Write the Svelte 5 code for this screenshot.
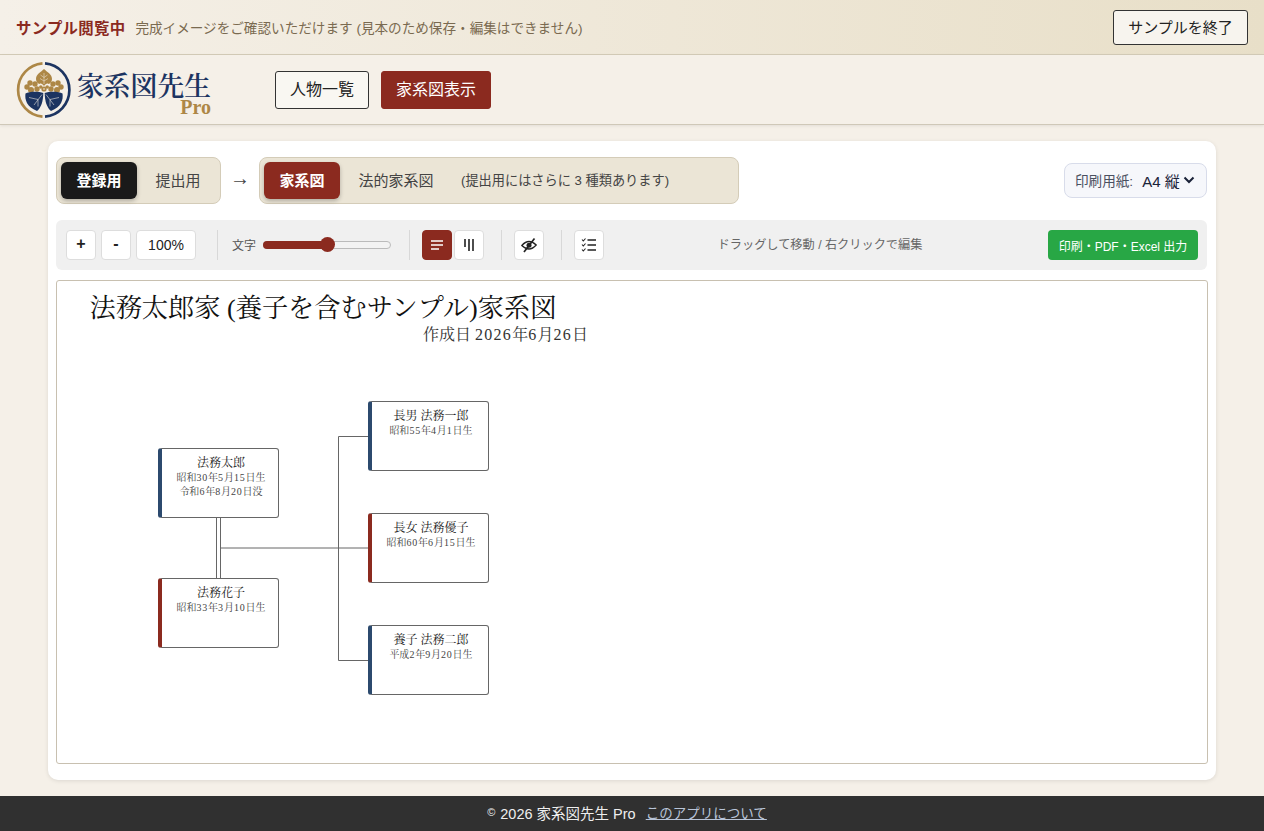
<script>
  const nodes = [
    { name: '法務太郎', lines: ['昭和30年5月15日生', '令和6年8月20日没'], x: 101, y: 167, g: 'm' },
    { name: '法務花子', lines: ['昭和33年3月10日生'], x: 101, y: 297, g: 'f' },
    { name: '長男 法務一郎', lines: ['昭和55年4月1日生'], x: 311, y: 120, g: 'm' },
    { name: '長女 法務優子', lines: ['昭和60年6月15日生'], x: 311, y: 232, g: 'f' },
    { name: '養子 法務二郎', lines: ['平成2年9月20日生'], x: 311, y: 344, g: 'm' }
  ];
  const parts = (s) => s.split(/(\d+)/).filter(Boolean).map((t) => ({ t, num: /^\d/.test(t) }));
</script>

<div class="page">
  <div class="banner">
    <div class="banner-msg">
      <strong>サンプル閲覧中</strong>
      <span>完成イメージをご確認いただけます (見本のため保存・編集はできません)</span>
    </div>
    <button class="exit">サンプルを終了</button>
  </div>

  <header class="header">
    <div class="logo">
      <svg class="mark" viewBox="2 2 56 56" width="56" height="56" aria-hidden="true">
        <path d="M28.500 3.400 A26.700 26.700 0 0 0 28.500 56.600" fill="none" stroke="#ad8746" stroke-width="2.700"/>
        <path d="M31 3.400 A26.700 26.700 0 0 1 31 56.600" fill="none" stroke="#1c3461" stroke-width="2.700"/>
        <path d="M30 9 C33 12 38 14 38 19 C38 22 36 23.500 34.500 24 C33 23 31.500 24 30 26 C28.500 24 27 23 25.500 24 C24 23.500 22 22 22 19 C22 14 27 12 30 9Z" fill="#ad8746"/>
        <path d="M30 13 V24 M30 17.500 L26.500 15 M30 17.500 L33.500 15 M30 21 L26 18.500 M30 21 L34 18.500" stroke="#f5f0e8" stroke-width=".5" fill="none"/>
        <g fill="#ad8746">
          <circle cx="16" cy="23" r="2.700"/><circle cx="21" cy="24" r="2.700"/><circle cx="13" cy="27" r="2.700"/><circle cx="23" cy="29" r="2.700"/><circle cx="17" cy="30" r="3"/>
          <circle cx="44" cy="23" r="2.700"/><circle cx="39" cy="24" r="2.700"/><circle cx="47" cy="27" r="2.700"/><circle cx="37" cy="29" r="2.700"/><circle cx="43" cy="30" r="3"/>
          <circle cx="30" cy="29" r="2.600"/><circle cx="26.800" cy="27" r="1.800"/><circle cx="33.200" cy="27" r="1.800"/>
        </g>
        <circle cx="30" cy="29" r=".8" fill="#f5f0e8"/>
        <path d="M29.300 33 C24 31 15 31.500 11.500 33.500 C10.500 40 13 47 23 51 C27 48 29.300 41 29.300 33Z" fill="#1c3461"/>
        <path d="M30.700 33 C36 31 45 31.500 48.500 33.500 C49.500 40 47 47 37 51 C33 48 30.700 41 30.700 33Z" fill="#1c3461"/>
        <path d="M28 34.500 L20 45 M24 39.500 L15 37.500 M24 39.500 L24 46.500 M32 34.500 L40 45 M36 39.500 L45 37.500 M36 39.500 L36 46.500" stroke="#e8e4dc" stroke-width=".6" fill="none"/>
      </svg>
      <div class="logo-text">
        <span class="logo-name">家系図先生</span>
        <span class="logo-pro">Pro</span>
      </div>
    </div>
    <nav class="nav">
      <button class="nav-btn">人物一覧</button>
      <button class="nav-btn active">家系図表示</button>
    </nav>
  </header>

  <main class="main">
    <section class="card">
      <div class="tabs-row">
        <div class="seg">
          <button class="seg-btn dark">登録用</button>
          <button class="seg-btn second">提出用</button>
        </div>
        <span class="arrow">→</span>
        <div class="seg">
          <button class="seg-btn red">家系図</button>
          <button class="seg-btn legal">法的家系図</button>
          <span class="seg-note">(提出用にはさらに 3 種類あります)</span>
        </div>
        <div class="paper">
          <span class="paper-label">印刷用紙:</span>
          <span class="paper-value">A4 縦</span>
          <svg width="12" height="12" viewBox="0 0 12 12" aria-hidden="true"><path d="M1.500 3.500 L6 8 L10.500 3.500" fill="none" stroke="#1a2238" stroke-width="2"/></svg>
        </div>
      </div>

      <div class="toolbar">
        <button class="tool bold">+</button>
        <button class="tool bold">-</button>
        <button class="tool zoom">100%</button>
        <span class="sep first"></span>
        <span class="tlabel">文字</span>
        <div class="slider"><div class="fill"></div><div class="thumb"></div></div>
        <span class="sep"></span>
        <div class="pair">
          <button class="tool on" aria-label="横">
            <svg width="14" height="14" viewBox="0 0 14 14"><path d="M1 3 H13 M1 7 H13 M1 11 H9" stroke="#fff" stroke-width="1.600"/></svg>
          </button>
          <button class="tool" aria-label="縦">
            <svg width="14" height="14" viewBox="0 0 14 14"><path d="M3 1 V9 M7 1 V13 M11 1 V13" stroke="#222" stroke-width="1.600"/></svg>
          </button>
        </div>
        <span class="sep"></span>
        <button class="tool" aria-label="非表示">
          <svg width="16" height="16" viewBox="0 0 16 16"><path d="M.8 8.500 C3.500 5.500 6 4.500 8 4.500 C10 4.500 12.500 5.500 15.200 8 C12.500 11 10 12 8 12 C6 12 3.500 11.200 .8 8.500Z" fill="none" stroke="#222" stroke-width="1.300"/><circle cx="8" cy="8.200" r="2.500" fill="#222"/><path d="M13.500 1.500 L3 15" stroke="#222" stroke-width="1.700"/></svg>
        </button>
        <span class="sep"></span>
        <button class="tool" aria-label="チェック">
          <svg width="16" height="16" viewBox="0 0 16 16"><path d="M6.500 3 H15 M6.500 8 H15 M6.500 13 H15" stroke="#222" stroke-width="1.400"/><path d="M1 2.500 L2.300 4 L4.500 1.500 M1 7.500 L2.300 9 L4.500 6.500 M1 12.500 L2.300 14 L4.500 11.500" fill="none" stroke="#222" stroke-width="1.100"/></svg>
        </button>
        <span class="hint">ドラッグして移動 / 右クリックで編集</span>
        <button class="export">印刷・PDF・Excel 出力</button>
      </div>

      <div class="canvas">
        <h1 class="title">法務太郎家 (養子を含むサンプル)家系図</h1>
        <p class="date">{#each parts('作成日 2026年6月26日') as p}<span class:num={p.num}>{p.t}</span>{/each}</p>
        <svg class="lines" width="1150" height="482" aria-hidden="true">
          <g fill="none" stroke="#666" stroke-width="1">
            <path d="M159.500 237 V297 M163.500 237 V297"/>
            <path d="M164 267 H311"/>
            <path d="M311 155.500 H281.500 V379.500 H311"/>
          </g>
        </svg>
        {#each nodes as n}
          <div class="node" class:f={n.g === 'f'} style="left:{n.x}px;top:{n.y}px">
            <div class="node-name">{n.name}</div>
            {#each n.lines as l}<div class="node-line">{#each parts(l) as p}<span class:num={p.num}>{p.t}</span>{/each}</div>{/each}
          </div>
        {/each}
      </div>
    </section>
  </main>

  <footer class="footer">
    <span class="copy">©</span> 2026 家系図先生 Pro <a href="#about">このアプリについて</a>
  </footer>
</div>

<style>
  :global(body) {
    margin: 0;
    background: #f5f0e8;
    font-family: "Liberation Sans", "Noto Sans CJK JP", sans-serif;
  }
  button { font-family: inherit; cursor: pointer; }
  .page { height: 831px; display: flex; flex-direction: column; overflow: hidden; }

  .banner {
    height: 54px;
    border-bottom: 1px solid #d4ccb8;
    background: linear-gradient(90deg, #f5f0e8, #e8dfc8);
    padding: 0 16px;
    display: flex;
    align-items: center;
    justify-content: space-between;
    flex: none;
  }
  .banner-msg { display: flex; align-items: center; gap: 10px; padding-bottom: 1px; }
  .banner-msg strong { color: #8b2a1f; font-size: 15.400px; letter-spacing: .3px; }
  .banner-msg span { color: #7a6a50; font-size: 13.600px; }
  .exit {
    width: 135px; height: 35px;
    border: 1.500px solid #333; border-radius: 3px;
    background: #f7f4ee; color: #222; font-size: 15px; padding: 0 0 2px;
  }

  .header {
    height: 69px;
    border-bottom: 1px solid #cfc8b8;
    box-shadow: 0 1px 3px rgba(0,0,0,.08);
    display: flex;
    align-items: center;
    padding: 0 16px;
    flex: none;
  }
  .logo { display: flex; align-items: center; gap: 5px; width: 259px; }
  .mark { flex: none; }
  .logo-text { display: flex; flex-direction: column; align-items: flex-end; }
  .logo-name { color: #1c3461; font-family: "Noto Serif CJK JP", "Noto Sans CJK JP", serif; font-weight: 600; font-size: 26.800px; line-height: 26px; margin-top: 7px; }
  .logo-pro { color: #ad8746; font-family: "Liberation Serif", serif; font-weight: 700; font-size: 20px; line-height: 16px; margin-top: 1px; }
  .nav { display: flex; gap: 12px; }
  .nav-btn {
    height: 38px; padding: 0 14px 3px;
    border: 1.500px solid #333; border-radius: 3px;
    background: #f9f7f2; color: #222; font-size: 16px;
  }
  .nav-btn.active { background: #8b2a1f; border-color: #8b2a1f; color: #fff; }

  .main { flex: 1; padding: 16px 48px; min-height: 0; }
  .card {
    height: 639px; box-sizing: border-box;
    background: #fff; border-radius: 10px;
    box-shadow: 0 1px 4px rgba(0,0,0,.1);
    padding: 16px 8px;
    display: flex; flex-direction: column;
  }
  .tabs-row { display: flex; align-items: center; height: 47px; flex: none; }
  .seg {
    display: flex; align-items: center; height: 47px; box-sizing: border-box;
    background: #ebe5d6; border: 1px solid #d4ccb8; border-radius: 8px;
    padding: 0 4px;
  }
  .seg-btn {
    height: 37px; width: 76px; padding: 0 0 3px;
    border: 0; border-radius: 6px; background: none;
    font-size: 15px; color: #444;
  }
  .seg-btn.second { width: 79px; padding-left: 3px; }
  .seg-btn.legal { width: 112px; }
  .seg-btn.dark, .seg-btn.red { color: #fff; font-weight: 700; box-shadow: 0 2px 4px rgba(0,0,0,.25); }
  .seg-btn.dark { background: #1a1a1a; }
  .seg-btn.red { background: #8b2a1f; }
  .seg-note { font-size: 13.200px; color: #444; margin: 0 65px 2px 9px; white-space: nowrap; }
  .arrow { width: 38px; text-align: center; font-size: 20px; color: #444; padding-bottom: 5px; }
  .paper {
    margin-left: auto; margin-right: 1px;
    width: 143px; height: 35px; box-sizing: border-box;
    background: #f6f7fb; border: 1px solid #d8dcea; border-radius: 8px;
    display: flex; align-items: center; padding: 0 10px 1px; gap: 9px;
  }
  .paper-label { font-size: 13.600px; color: #4a5060; white-space: nowrap; }
  .paper-value { font-size: 15px; color: #1a2238; white-space: nowrap; margin-right: -6px; }

  .toolbar {
    margin-top: 16px; height: 50px; flex: none; margin-right: 1px;
    background: #f0f0f0; border-radius: 6px;
    display: flex; align-items: center; padding: 0 9px 0 10px; gap: 5px;
  }
  .tool {
    width: 30px; height: 30px; padding: 0;
    display: inline-flex; align-items: center; justify-content: center;
    background: #fff; border: 1px solid #ddd; border-radius: 4px;
    font-size: 14px; color: #222; flex: none;
  }
  .tool.bold { font-weight: 700; font-size: 16px; padding-bottom: 2px; }
  .tool.zoom { width: 60px; font-size: 14px; }
  .tool.on { background: #8b2a1f; border-color: #8b2a1f; }
  .pair { display: flex; gap: 2px; }
  .sep { width: 1px; height: 30px; background: #d8d8d8; margin: 0 7px 0 12px; flex: none; }
  .sep.first { margin-left: 16px; }
  .tlabel { font-size: 12px; color: #555; margin-left: 2px; margin-right: 2px; padding-bottom: 1px; }
  .slider { position: relative; width: 128px; height: 8px; background: #f3f3f3; border: 1px solid #bbb; border-radius: 4px; box-sizing: border-box; margin-right: 1px; flex: none; }
  .fill { position: absolute; left: -1px; top: -1px; height: 8px; width: 64px; background: #8b2a1f; border-radius: 4px; }
  .thumb { position: absolute; left: 56px; top: -5px; width: 15px; height: 15px; background: #8b2a1f; border-radius: 50%; }
  .hint { flex: 1; text-align: center; font-size: 12.200px; color: #666; padding-right: 12px; padding-bottom: 2px; }
  .export {
    width: 150px; height: 30px; padding: 0;
    background: #28a745; color: #fff; border: 0; border-radius: 4px; font-size: 12px; flex: none;
  }

  .canvas {
    position: relative; margin-top: 10px; margin-right: 0; flex: 1;
    border: 1px solid #c8c0b0; border-radius: 3px;
    font-family: "Liberation Serif", "Noto Serif CJK JP", "Noto Sans CJK JP", serif;
    min-height: 0;
  }
  .title {
    position: absolute; left: 32.500px; top: 10px; margin: 0;
    font-size: 26.200px; font-weight: 400; color: #111; line-height: 36px; white-space: nowrap;
  }
  .date { position: absolute; left: 366px; top: 43px; margin: 0; font-size: 16px; color: #333; line-height: 22px; white-space: nowrap; }
  .date .num { letter-spacing: .08em; }
  .lines { position: absolute; left: 0; top: 0; }
  .node {
    position: absolute; width: 121px; height: 70.400px; box-sizing: border-box;
    background: #fff; border: 1px solid #666; border-left: 4px solid #2c4a6e; border-radius: 3px;
    text-align: center; padding: 6px 0 0 2px; color: #333;
  }
  .node.f { border-left-color: #8b2a1f; }
  .node-name { font-size: 12px; line-height: 16px; color: #222; }
  .node-line { font-size: 10px; line-height: 14px; color: #444; white-space: nowrap; }
  .node-line .num { letter-spacing: .08em; }

  .footer {
    height: 35px; flex: none; box-sizing: border-box;
    background: #303030; color: #eee; font-size: 14.500px;
    display: flex; align-items: center; justify-content: center; gap: 4px;
    white-space: pre; padding: 0 10px 3px 0;
  }
  .copy { font-size: 11px; margin-right: -3px; }
  .footer a { color: #b8c4d8; margin-left: 2px; font-size: 13.500px; }
</style>
